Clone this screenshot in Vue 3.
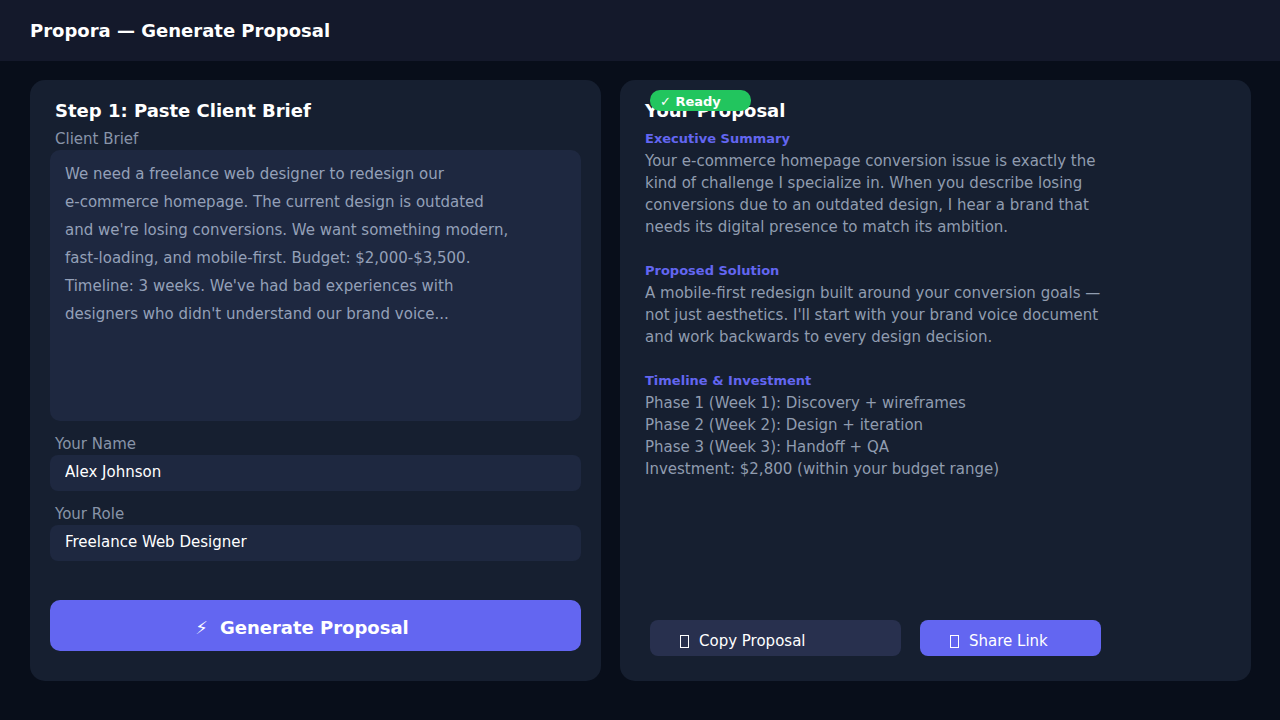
<script setup>
import { ref } from 'vue'

const brief = ref(
  [
    'We need a freelance web designer to redesign our',
    'e-commerce homepage. The current design is outdated',
    "and we're losing conversions. We want something modern,",
    'fast-loading, and mobile-first. Budget: $2,000-$3,500.',
    "Timeline: 3 weeks. We've had bad experiences with",
    "designers who didn't understand our brand voice...",
  ].join('\n')
)
const name = ref('Alex Johnson')
const role = ref('Freelance Web Designer')

const sections = [
  {
    title: 'Executive Summary',
    lines: [
      'Your e-commerce homepage conversion issue is exactly the',
      'kind of challenge I specialize in. When you describe losing',
      'conversions due to an outdated design, I hear a brand that',
      'needs its digital presence to match its ambition.',
    ],
  },
  {
    title: 'Proposed Solution',
    lines: [
      'A mobile-first redesign built around your conversion goals —',
      "not just aesthetics. I'll start with your brand voice document",
      'and work backwards to every design decision.',
    ],
  },
  {
    title: 'Timeline & Investment',
    lines: [
      'Phase 1 (Week 1): Discovery + wireframes',
      'Phase 2 (Week 2): Design + iteration',
      'Phase 3 (Week 3): Handoff + QA',
      'Investment: $2,800 (within your budget range)',
    ],
  },
]
</script>

<template>
  <div class="page">
    <header class="topbar">
      <h1>Propora — Generate Proposal</h1>
    </header>
    <main class="columns">
      <form class="card" @submit.prevent>
        <h2>Step 1: Paste Client Brief</h2>
        <label class="first-label" for="brief">Client Brief</label>
        <textarea id="brief" v-model="brief" spellcheck="false"></textarea>
        <label for="name">Your Name</label>
        <input id="name" v-model="name" type="text" />
        <label for="role">Your Role</label>
        <input id="role" v-model="role" type="text" />
        <button class="generate" type="submit">
          <span class="bolt">⚡&#xFE0E;</span>
          <span>Generate Proposal</span>
        </button>
      </form>

      <section class="card">
        <h2>Your Proposal</h2>
        <span class="badge">✓ Ready</span>
        <div class="proposal">
          <article v-for="s in sections" :key="s.title">
            <h3>{{ s.title }}</h3>
            <p>{{ s.lines.join('\n') }}</p>
          </article>
        </div>
        <div class="actions">
          <button class="action copy" type="button">
            <svg width="9" height="14" viewBox="0 0 9 14" aria-hidden="true">
              <rect x="0.5" y="1.5" width="8" height="12" />
            </svg>
            Copy Proposal
          </button>
          <button class="action share" type="button">
            <svg width="9" height="14" viewBox="0 0 9 14" aria-hidden="true">
              <rect x="0.5" y="1.5" width="8" height="12" />
            </svg>
            Share Link
          </button>
        </div>
      </section>
    </main>
  </div>
</template>

<style>
body {
  background: #080e1a;
}
</style>

<style scoped>
.page,
.page * {
  box-sizing: border-box;
}
.page {
  display: flex;
  flex-direction: column;
  min-height: 100vh;
  background: #080e1a;
  color: #fff;
  font-family: "DejaVu Sans", sans-serif;
  font-size: 15px;
  line-height: 22px;
}
h1,
h2,
h3,
p {
  margin: 0;
}
h1,
h2 {
  font-size: 18px;
  line-height: 22px;
  font-weight: 700;
}
.topbar {
  padding: 20px 30px 19px;
  background: #14192b;
}
.columns {
  flex: 1;
  display: grid;
  grid-template-columns: 571fr 631fr;
  gap: 19px;
  padding: 19px 29px 39px 30px;
}
.card {
  position: relative;
  display: flex;
  flex-direction: column;
  min-width: 0;
  padding: 20px 20px 30px;
  border-radius: 15px;
  background: #161f30;
}
.card h2 {
  padding-left: 5px;
}
label {
  margin-top: 12px;
  padding-left: 5px;
  color: #8894a8;
}
.first-label {
  margin-top: 6px;
}
textarea,
input {
  width: 100%;
  margin: 0;
  border: 0;
  outline: 0;
  background: #1e2840;
  font: inherit;
  border-radius: 8px;
}
textarea {
  flex: 1;
  min-height: 200px;
  padding: 10px 15px;
  border-radius: 10px;
  color: #94a0b8;
  line-height: 28px;
  resize: none;
}
input {
  height: 36px;
  padding: 0 15px 2px;
  color: #fff;
}
button {
  border: 0;
  color: #fff;
  font-family: inherit;
  cursor: pointer;
}
.generate {
  display: flex;
  align-items: center;
  justify-content: center;
  gap: 12px;
  height: 51px;
  margin-top: 39px;
  padding: 4px 27px 0 0;
  border-radius: 10px;
  background: #6366f1;
  font-size: 18px;
  font-weight: 700;
}
.bolt {
  font-weight: 400;
}
.badge {
  position: absolute;
  top: 10px;
  left: 30px;
  width: 101px;
  height: 21px;
  padding: 1px 0 0 10px;
  border-radius: 10px;
  background: #22c55e;
  font-size: 13px;
  line-height: 22px;
  font-weight: 700;
}
.proposal {
  display: flex;
  flex-direction: column;
  gap: 22px;
  margin-top: 6px;
  padding-left: 5px;
}
h3 {
  color: #6366f1;
  font-size: 13px;
  line-height: 22px;
  font-weight: 700;
}
p {
  color: #909caf;
  white-space: pre-line;
}
.actions {
  display: flex;
  gap: 19px;
  margin-top: auto;
  padding: 0 0 0 10px;
}
.card:last-child {
  padding-bottom: 25px;
}
.action {
  display: flex;
  align-items: center;
  gap: 10px;
  height: 36px;
  padding: 6px 30px 0;
  border-radius: 8px;
  font-size: 15px;
}
.action rect {
  fill: none;
  stroke: #fff;
}
.copy {
  width: 251px;
  background: #28304e;
}
.share {
  width: 181px;
  background: #6366f1;
}
</style>
